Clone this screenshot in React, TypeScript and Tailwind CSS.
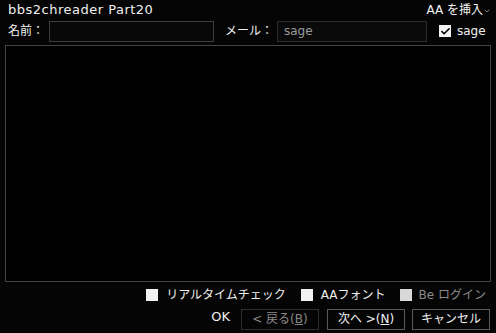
import { ChevronDown, Check } from 'lucide-react';

function Box({ checked, disabled }: { checked?: boolean; disabled?: boolean }) {
    return (
        <span
            className={`w-[12px] h-[12px] shrink-0 flex items-center justify-center ${disabled ? 'bg-[#d8d8d8]' : 'bg-[#f2f2f2]'}`}
        >
            {checked && <Check size={11} strokeWidth={3.5} className="text-black" />}
        </span>
    );
}

export default function App() {
    const font = { fontFamily: '"DejaVu Sans", "Noto Sans CJK JP", sans-serif' };

    return (
        <div className="w-[496px] h-[333px] bg-[#050505] text-[#f0f0f0] text-[12px] leading-none flex flex-col px-[5px] overflow-hidden" style={font}>
            <div className="flex items-center justify-between h-[19px] pl-[3px]">
                <span className="text-[13px] tracking-[0.5px]">bbs2chreader Part20</span>
                <span className="flex items-center text-[12px] text-[#f4f4f4]">
                    AA を挿入
                    <ChevronDown size={8} strokeWidth={2} className="text-[#bbb] mt-[2px]" />
                </span>
            </div>

            <div className="flex items-center h-[24px] pl-[3px]">
                <span className="w-[41px] shrink-0">名前：</span>
                <div className="w-[165px] h-[21px] shrink-0 border border-[#3d3d3d] bg-[#080808]" />
                <span className="ml-[11px] w-[52px] shrink-0">メール：</span>
                <div className="w-[150px] h-[21px] shrink-0 border border-[#2c2c2c] bg-[#0a0a0a] flex items-center px-[6px] text-[#9a9a9a] text-[12px]">
                    sage
                </div>
                <span className="ml-[12px] flex items-center gap-[6px] shrink-0">
                    <Box checked />
                    <span className="text-[12px]">sage</span>
                </span>
            </div>

            <div className="mt-[2px] h-[237px] border border-[#444] bg-[#000]" />

            <div className="flex items-center justify-end h-[26px] pr-[5px]">
                <span className="flex items-center gap-[8px]">
                    <Box />
                    <span>リアルタイムチェック</span>
                </span>
                <span className="flex items-center gap-[8px] ml-[15px]">
                    <Box />
                    <span>AAフォント</span>
                </span>
                <span className="flex items-center gap-[7px] ml-[14px]">
                    <Box disabled />
                    <span className="text-[#8a8a8a]">Be ログイン</span>
                </span>
            </div>

            <div className="flex items-center justify-end h-[22px] pr-[1px]">
                <span className="mr-[11px] mb-[6px] text-[13px]">OK</span>
                <button className="w-[78px] h-[21px] border border-[#2e2e2e] text-[#8a8a8a] flex items-center justify-center">
                    &lt; 戻る(<span className="underline">B</span>)
                </button>
                <button className="ml-[8px] w-[78px] h-[21px] border border-[#5a5a5a] flex items-center justify-center">
                    次へ &gt;(<span className="underline">N</span>)
                </button>
                <button className="ml-[7px] w-[78px] h-[21px] border border-[#5a5a5a] flex items-center justify-center">
                    キャンセル
                </button>
            </div>
        </div>
    );
}
